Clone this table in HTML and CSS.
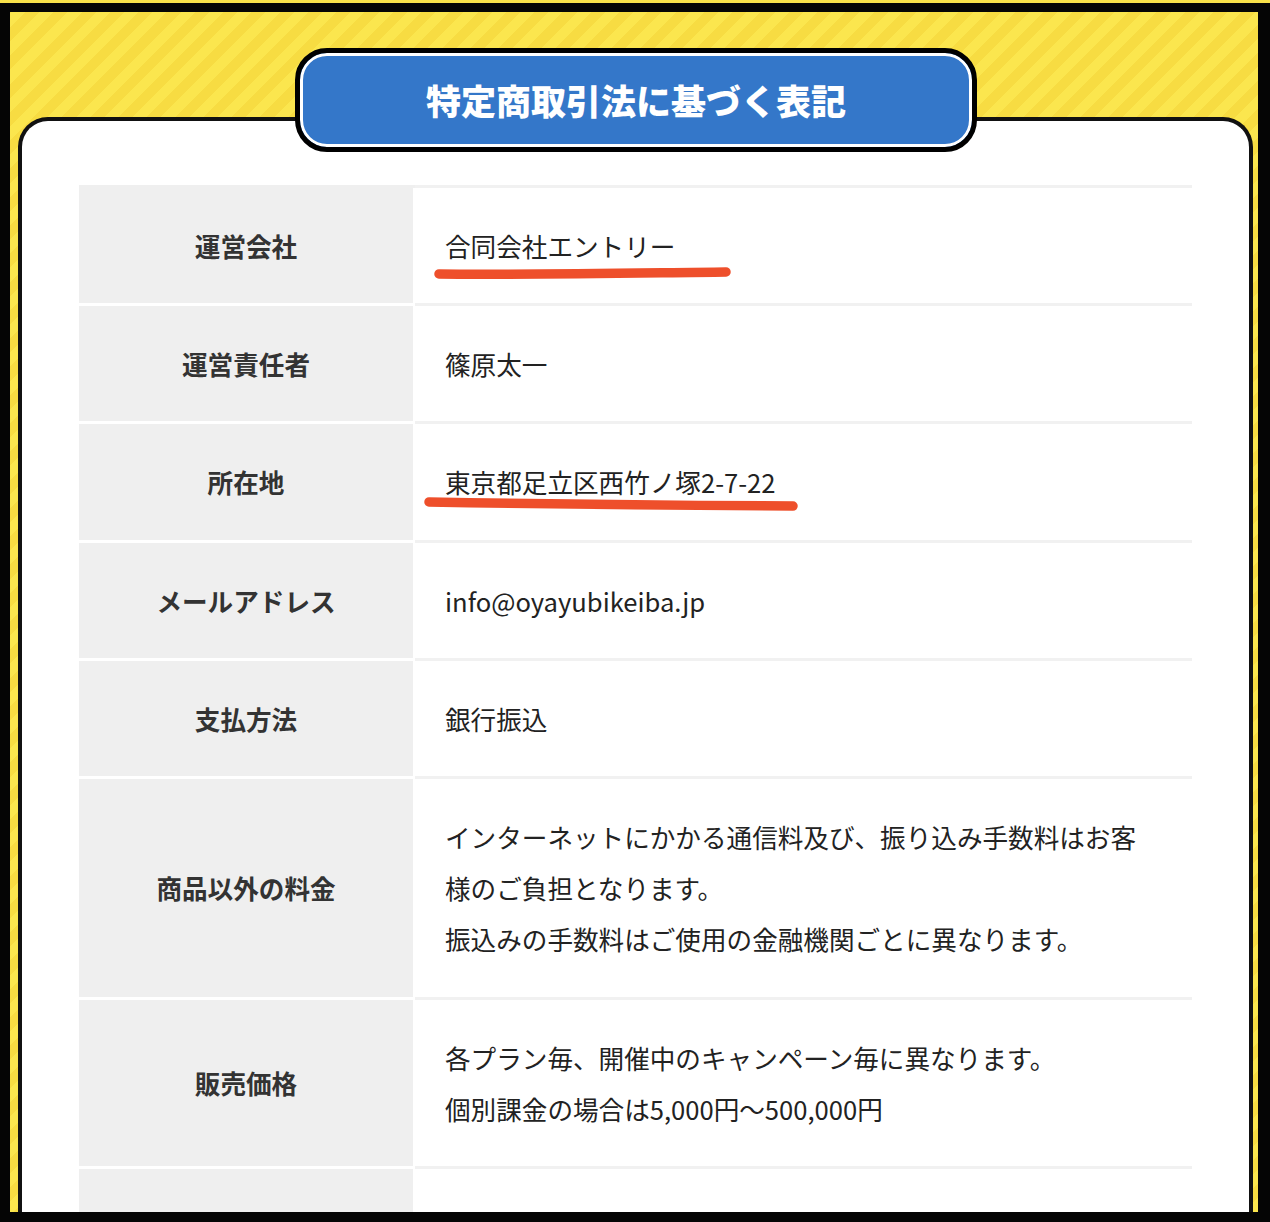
FILE: index.html
```html
<!DOCTYPE html>
<html lang="ja">

<head>
    <meta charset="UTF-8">
    <meta name="viewport" content="width=device-width, initial-scale=1.0">
    <title>特定商取引法に基づく表記</title>
    <link rel="stylesheet" href="styles.css">
</head>

<body>
    <div class="top-edge"></div>
    <div class="screen">
        <h1 class="heading">特定商取引法に基づく表記</h1>
        <div class="card">
            <table class="law-table">
                <tr>
                    <th>運営会社</th>
                    <td>
                        <span class="marked">合同会社エントリー
                            <svg class="marker marker-company" width="300" height="16" viewBox="0 0 300 16">
                                <path d="M5 9 C 90 10, 200 8, 292 7" />
                            </svg>
                        </span>
                    </td>
                </tr>
                <tr>
                    <th>運営責任者</th>
                    <td>篠原太一</td>
                </tr>
                <tr>
                    <th>所在地</th>
                    <td>
                        <span class="marked">東京都足立区西竹ノ塚2-7-22
                            <svg class="marker marker-address" width="380" height="18" viewBox="0 0 380 18">
                                <path d="M5 6 Q 180 9 369 10" />
                            </svg>
                        </span>
                    </td>
                </tr>
                <tr>
                    <th>メールアドレス</th>
                    <td>info@oyayubikeiba.jp</td>
                </tr>
                <tr>
                    <th>支払方法</th>
                    <td>銀行振込</td>
                </tr>
                <tr>
                    <th>商品以外の料金</th>
                    <td>インターネットにかかる通信料及び、振り込み手数料はお客様のご負担となります。<br>振込みの手数料はご使用の金融機関ごとに異なります。</td>
                </tr>
                <tr>
                    <th>販売価格</th>
                    <td>各プラン毎、開催中のキャンペーン毎に異なります。<br>個別課金の場合は5,000円〜500,000円</td>
                </tr>
                <tr>
                    <th>&nbsp;</th>
                    <td>&nbsp;</td>
                </tr>
            </table>
        </div>
    </div>
</body>

</html>
```

FILE: styles.css
```css
html,
body {
    margin: 0;
    padding: 0;
}

body {
    background-color: #050505;
    font-family: "Noto Sans CJK JP", "Noto Sans", sans-serif;
    color: #222;
    height: 1222px;
    overflow: hidden;
}

.top-edge {
    height: 3px;
    background-color: #f9e24a;
}

.screen {
    margin: 9px 12px 0 10px;
    height: 1200px;
    overflow: hidden;
    padding-top: 36px;
    box-sizing: border-box;
    background: repeating-linear-gradient(-45deg, #fbe64e 0 10px, #f7dc42 10px 20px);
}

.heading {
    position: relative;
    z-index: 1;
    width: 682px;
    height: 104px;
    box-sizing: border-box;
    margin: 0 0 -35px 285px;
    border: 5px solid #000;
    border-radius: 32px;
    background-color: #3477c9;
    box-shadow: inset 0 0 0 3px #fff;
    color: #fff;
    font-size: 35px;
    font-weight: 900;
    line-height: 94px;
    text-align: center;
}

.card {
    margin: 0 5px 0 8px;
    background-color: #fff;
    border: 4px solid #111;
    border-bottom: none;
    border-radius: 30px 30px 0 0;
    padding: 64px 57px 0;
    min-height: 1100px;
}

.law-table {
    width: 100%;
    border-collapse: collapse;
    table-layout: fixed;
    font-size: 25.6px;
    line-height: 2;
}

.law-table th {
    width: 270px;
    padding: 32px;
    background-color: #efefef;
    border-bottom: 3px solid #fff;
    border-right: 2px solid #fff;
    color: #333;
    font-weight: 700;
    text-align: center;
    vertical-align: middle;
}

.law-table td {
    padding: 32px 34px 32px 30px;
    border-bottom: 3px solid #f1f1f1;
    vertical-align: middle;
    text-align: left;
}

.law-table tr:first-child td {
    border-top: 3px solid #f1f1f1;
}

.law-table tr:first-child th {
    border-top: 3px solid #efefef;
}

.marked {
    position: relative;
    display: inline-block;
    line-height: 51.2px;
}

.marker {
    position: absolute;
    fill: none;
    stroke: #ee4f2b;
    stroke-linecap: round;
    overflow: visible;
}

.marker path {
    stroke-width: 9.5;
}

.marker-company {
    left: -11px;
    top: 45px;
}

.marker-address {
    left: -21px;
    top: 40px;
}
```
